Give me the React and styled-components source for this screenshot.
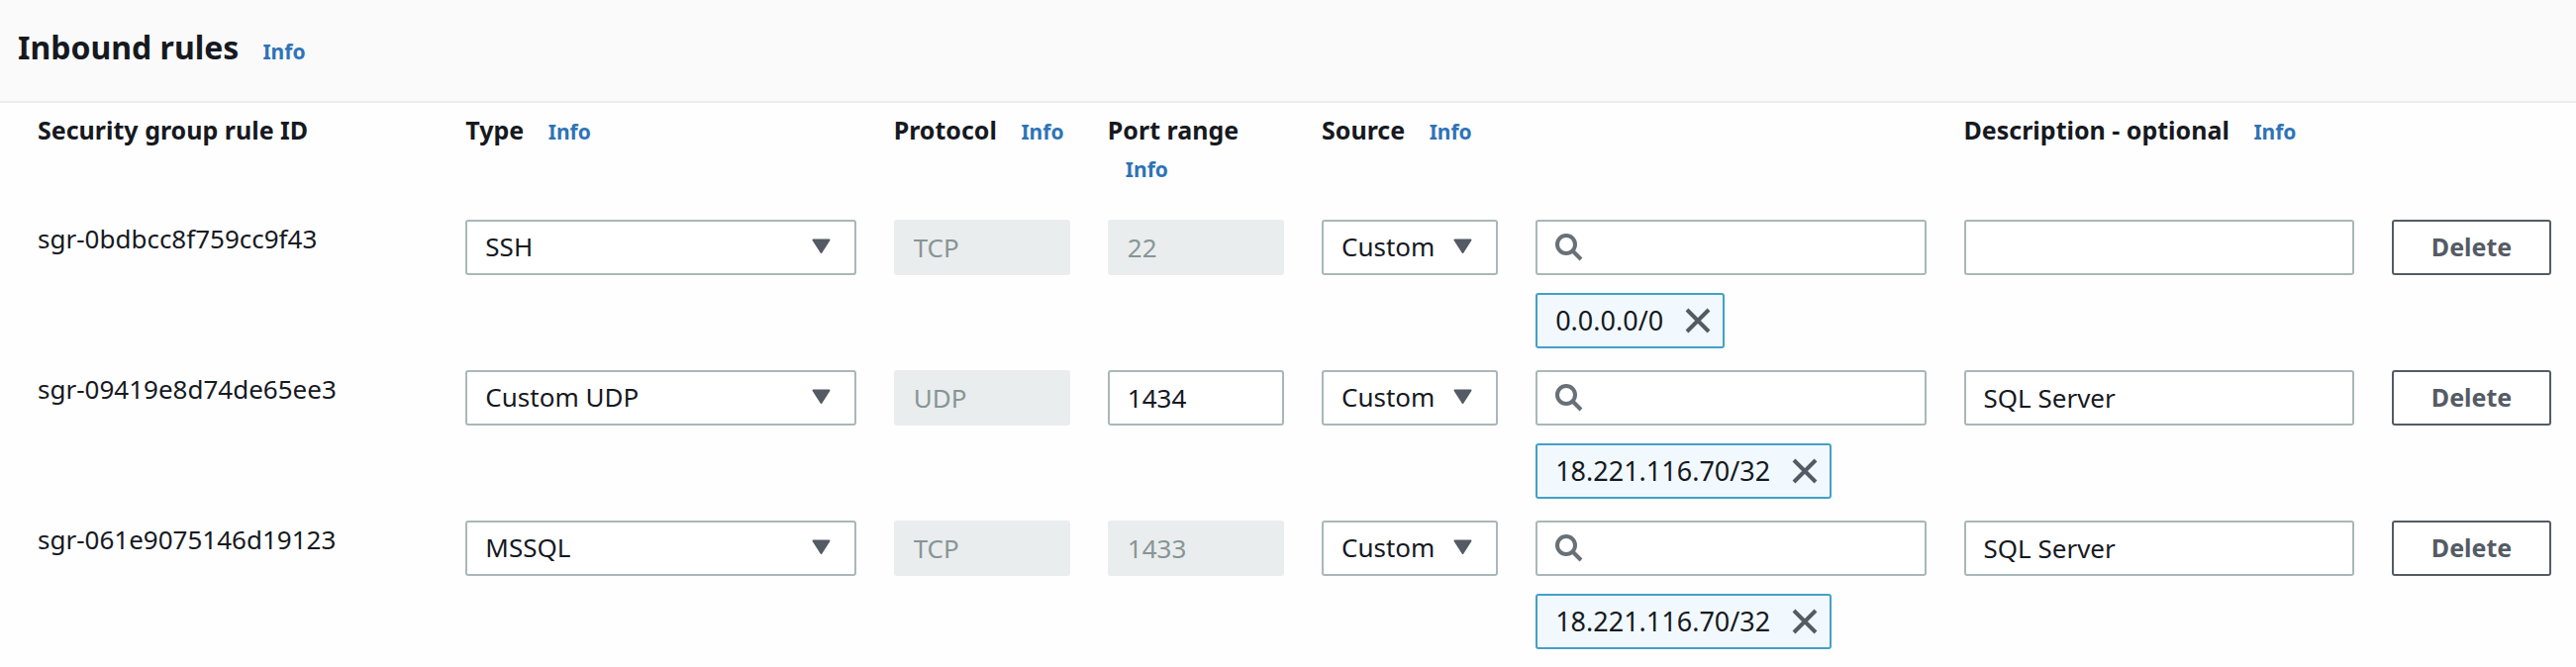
import React, { useState } from "react";
import styled, { createGlobalStyle } from "styled-components";

const GlobalStyle = createGlobalStyle`
  *, *::before, *::after { box-sizing: border-box; }
  body {
    margin: 0;
    background: #fefefe;
    color: #16191f;
    font-family: "Noto Sans", "Open Sans", sans-serif;
    font-size: 26px;
    line-height: 38px;
  }
`;

const Header = styled.header`
  display: flex;
  align-items: baseline;
  padding: 25px 18px 31px;
  background: #fafafa;
  border-bottom: 2px solid #eaeded;
`;

const Title = styled.h2`
  margin: 0;
  font-size: 32px;
  line-height: 46px;
  font-weight: 700;
`;

const InfoLink = styled.a`
  display: inline-block;
  margin-left: ${({ $wide }) => ($wide ? 24 : 18)}px;
  color: #2e73b8;
  font-size: 21px;
  font-weight: 700;
  text-decoration: none;
`;

const Table = styled.table`
  display: block;
  padding: 8px 8px 18px 38px;
`;

const Head = styled.thead`
  display: block;
`;

const Body = styled.tbody`
  display: grid;
  gap: 22px;
  padding-top: 32px;
`;

const Row = styled.tr`
  display: grid;
  grid-template-columns: repeat(12, minmax(0, 1fr));
  column-gap: 38px;
  align-items: start;
`;

const HeadCell = styled.th`
  grid-column: span ${({ $span }) => $span};
  padding: 0;
  text-align: left;
  font-size: 25px;
  font-weight: 700;
`;

const Cell = styled.td`
  grid-column: span ${({ $span }) => $span};
  padding: 0;
`;

const RuleId = styled.div`
  white-space: nowrap;
`;

const fieldStyles = `
  width: 100%;
  height: 56px;
  border: 2px solid #aab7b8;
  border-radius: 3px;
  background: #ffffff;
  color: #16191f;
  font-family: inherit;
  font-size: 26px;
  outline: none;
`;

const TextField = styled.input`
  ${fieldStyles}
  display: block;
  padding: 0 18px 0 ${({ $icon }) => ($icon ? 60 : 18)}px;
  &:disabled {
    border-color: #eaeded;
    background: #eaeded;
    color: #879596;
  }
`;

const FieldWrap = styled.div`
  position: relative;
`;

const Select = styled.select`
  ${fieldStyles}
  display: block;
  padding: 0 44px 2px 18px;
  appearance: none;
`;

const Caret = styled.svg`
  position: absolute;
  top: 19px;
  right: 26px;
  width: 19px;
  height: 16px;
  pointer-events: none;
`;

const SearchIcon = styled.svg`
  position: absolute;
  top: 13px;
  left: 19px;
  width: 30px;
  height: 30px;
  pointer-events: none;
`;

const Token = styled.div`
  display: flex;
  align-items: center;
  gap: 22px;
  width: fit-content;
  height: 56px;
  margin-top: 18px;
  padding: 0 12px 0 18px;
  border: 2px solid #44a0c8;
  border-radius: 3px;
  background: #f2f9fe;
  font-size: 27px;
`;

const DismissButton = styled.button`
  display: flex;
  padding: 0;
  border: 0;
  background: none;
  cursor: pointer;
`;

const DeleteButton = styled.button`
  height: 56px;
  padding: 0 38px 2px;
  border: 2px solid #545b64;
  border-radius: 3px;
  background: #ffffff;
  color: #545b64;
  font-family: inherit;
  font-size: 25px;
  font-weight: 700;
  cursor: pointer;
`;

const rules = [
  { id: "sgr-0bdbcc8f759cc9f43", type: "SSH", protocol: "TCP", port: "22", cidr: "0.0.0.0/0", description: "" },
  { id: "sgr-09419e8d74de65ee3", type: "Custom UDP", protocol: "UDP", port: "1434", cidr: "18.221.116.70/32", description: "SQL Server" },
  { id: "sgr-061e9075146d19123", type: "MSSQL", protocol: "TCP", port: "1433", cidr: "18.221.116.70/32", description: "SQL Server" },
];

const types = ["SSH", "Custom UDP", "MSSQL"];
const sources = ["Custom", "Anywhere", "My IP"];

function Info({ wide, topic }) {
  return (
    <InfoLink href="#info" $wide={wide} aria-label={`Info: ${topic}`}>
      Info
    </InfoLink>
  );
}

function ColumnHead({ span, colSpan, children, info }) {
  return (
    <HeadCell scope="col" $span={span} colSpan={colSpan}>
      {children} {info && <Info topic={children} />}
    </HeadCell>
  );
}

function SelectField({ label, value, options }) {
  const [current, setCurrent] = useState(value);
  return (
    <FieldWrap>
      <Select aria-label={label} value={current} onChange={(e) => setCurrent(e.target.value)}>
        {options.map((option) => (
          <option key={option}>{option}</option>
        ))}
      </Select>
      <Caret viewBox="0 0 19 16" aria-hidden="true">
        <path d="M1.5 1.5H17.5L9.5 14Z" fill="#545b64" stroke="#545b64" strokeWidth="2" strokeLinejoin="round" />
      </Caret>
    </FieldWrap>
  );
}

function SourceToken({ cidr }) {
  const [shown, setShown] = useState(true);
  if (!shown) return null;
  return (
    <Token>
      <span>{cidr}</span>
      <DismissButton type="button" aria-label={`Remove ${cidr}`} onClick={() => setShown(false)}>
        <svg width="26" height="26" viewBox="0 0 26 26" aria-hidden="true">
          <path d="M2 2L24 24M24 2L2 24" stroke="#545b64" strokeWidth="4" />
        </svg>
      </DismissButton>
    </Token>
  );
}

function RuleRow({ rule, onDelete }) {
  const isCustomType = rule.type.startsWith("Custom");
  return (
    <Row>
      <Cell $span={2}>
        <RuleId>{rule.id}</RuleId>
      </Cell>
      <Cell $span={2}>
        <SelectField label={`Type for ${rule.id}`} value={rule.type} options={types} />
      </Cell>
      <Cell $span={1}>
        <TextField aria-label={`Protocol for ${rule.id}`} defaultValue={rule.protocol} disabled />
      </Cell>
      <Cell $span={1}>
        <TextField aria-label={`Port range for ${rule.id}`} defaultValue={rule.port} disabled={!isCustomType} />
      </Cell>
      <Cell $span={1}>
        <SelectField label={`Source for ${rule.id}`} value="Custom" options={sources} />
      </Cell>
      <Cell $span={2}>
        <FieldWrap>
          <TextField type="text" aria-label={`Source search for ${rule.id}`} $icon />
          <SearchIcon viewBox="0 0 30 30" fill="none" stroke="#687078" strokeWidth="4" aria-hidden="true">
            <circle cx="12" cy="12" r="9" />
            <path d="M18.5 18.5L27 27" />
          </SearchIcon>
        </FieldWrap>
        <SourceToken cidr={rule.cidr} />
      </Cell>
      <Cell $span={2}>
        <TextField aria-label={`Description for ${rule.id}`} defaultValue={rule.description} />
      </Cell>
      <Cell $span={1}>
        <DeleteButton type="button" onClick={onDelete}>
          Delete
        </DeleteButton>
      </Cell>
    </Row>
  );
}

export default function App() {
  const [items, setItems] = useState(rules);
  return (
    <main>
      <GlobalStyle />
      <Header>
        <Title>Inbound rules</Title>
        <Info wide topic="Inbound rules" />
      </Header>
      <Table>
        <Head>
          <Row>
            <ColumnHead span={2}>Security group rule ID</ColumnHead>
            <ColumnHead span={2} info>Type</ColumnHead>
            <ColumnHead span={1} info>Protocol</ColumnHead>
            <ColumnHead span={1} info>Port range</ColumnHead>
            <ColumnHead span={3} colSpan={2} info>Source</ColumnHead>
            <ColumnHead span={2} info>Description - optional</ColumnHead>
          </Row>
        </Head>
        <Body>
          {items.map((rule) => (
            <RuleRow
              key={rule.id}
              rule={rule}
              onDelete={() => setItems(items.filter((item) => item.id !== rule.id))}
            />
          ))}
        </Body>
      </Table>
    </main>
  );
}
